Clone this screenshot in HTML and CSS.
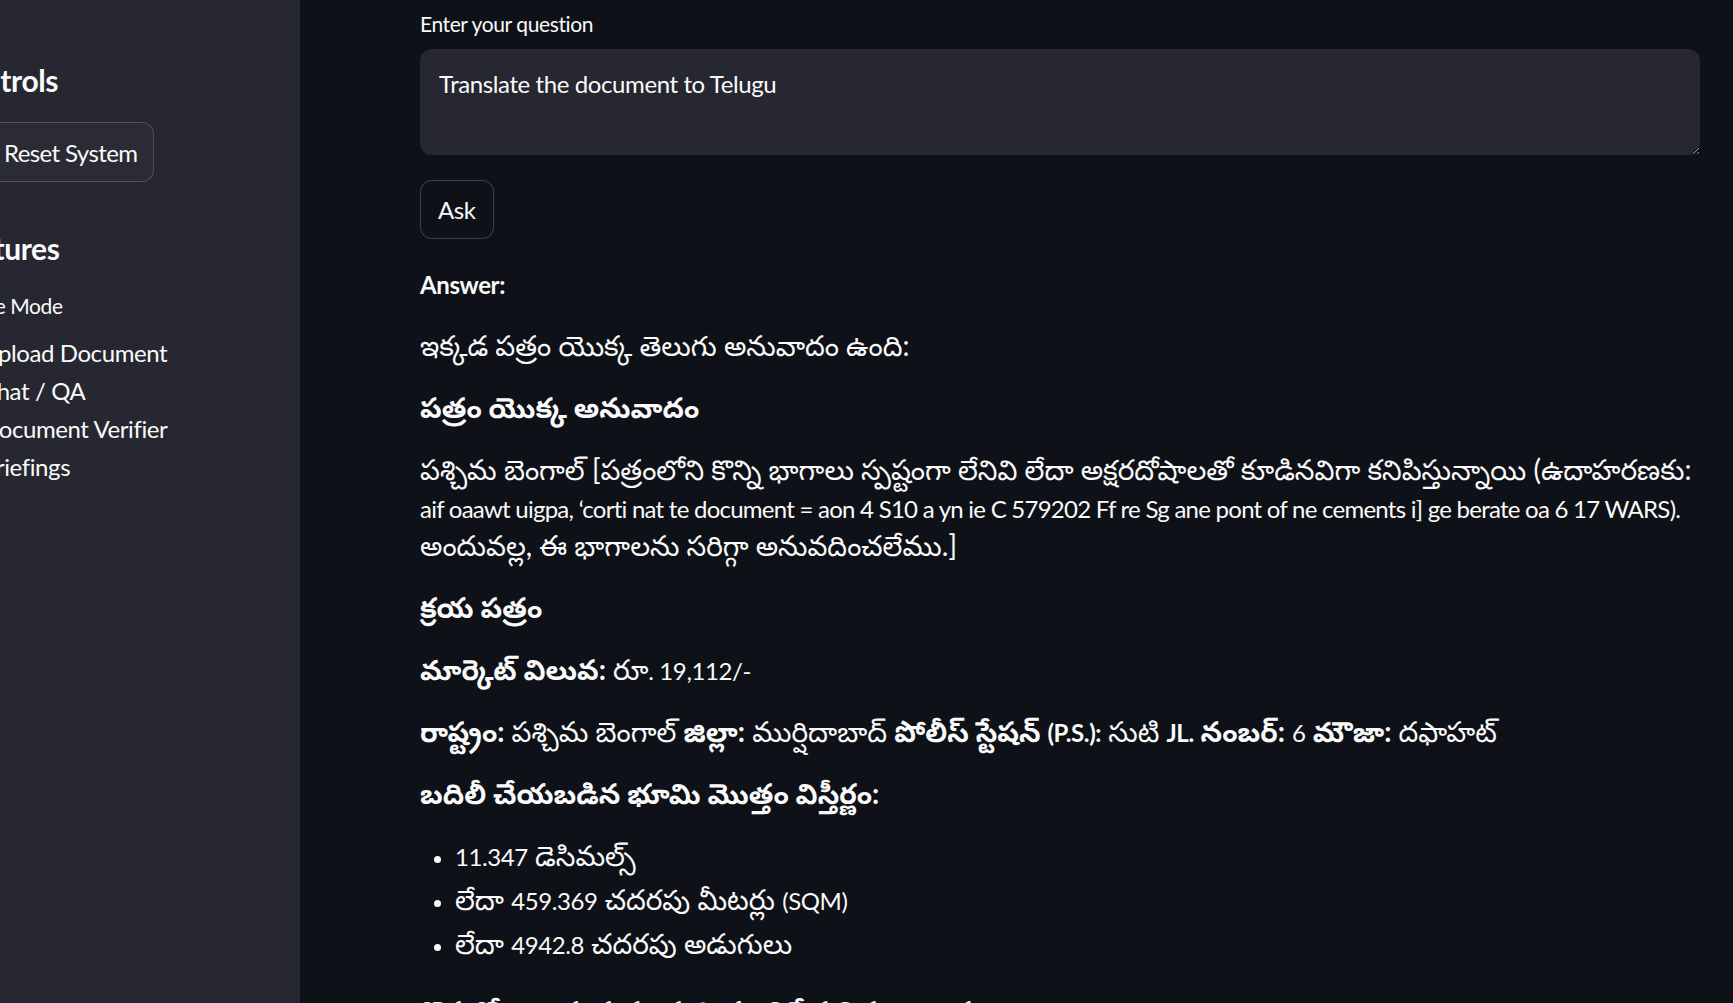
FILE: index.html
```html
<!DOCTYPE html>
<html lang="te">
<head>
<meta charset="utf-8">
<title>Document QA</title>
<link rel="stylesheet" href="styles.css">
</head>
<body>
<div class="app">
  <aside class="sidebar">
    <div class="sidebar-inner">
      <h2 class="side-title">Controls</h2>
      <button class="side-btn"><span class="btn-icon"><svg viewBox="0 0 24 24" width="22" height="22"><path d="M20 11a8 8 0 1 0-2.3 5.7" fill="none" stroke="#4a90e2" stroke-width="2.4"/><path d="M20 4v7h-7" fill="none" stroke="#4a90e2" stroke-width="2.4"/></svg></span>Reset System</button>
      <h2 class="side-title features">Features</h2>
      <div class="side-label">Choose Mode</div>
      <ul class="radio-list">
        <li><span class="radio"></span>Upload Document</li>
        <li><span class="radio on"></span>Chat / QA</li>
        <li><span class="radio"></span>Document Verifier</li>
        <li><span class="radio"></span>Briefings</li>
      </ul>
    </div>
  </aside>
  <main class="main">
    <div class="content">
      <label class="field-label" for="q">Enter your question</label>
      <textarea id="q" class="question">Translate the document to Telugu</textarea>
      <button class="ask-btn">Ask</button>
      <p class="answer-title"><span class="en">Answer:</span></p>
      <p>ఇక్కడ పత్రం యొక్క తెలుగు అనువాదం ఉంది:</p>
      <p class="sub">పత్రం యొక్క అనువాదం</p>
      <p>పశ్చిమ బెంగాల్ [పత్రంలోని కొన్ని భాగాలు స్పష్టంగా లేనివి లేదా అక్షరదోషాలతో కూడినవిగా కనిపిస్తున్నాయి (ఉదాహరణకు: <span class="en tight">aif oaawt uigpa, ‘corti nat te document = aon 4 S10 a yn ie C 579202 Ff re Sg ane pont of ne cements i] ge berate oa 6 17 WARS).</span> అందువల్ల, ఈ భాగాలను సరిగ్గా అనువదించలేము.]</p>
      <p class="sub">క్రయ పత్రం</p>
      <p><b>మార్కెట్ విలువ:</b> రూ<span class="en">. 19,112/-</span></p>
      <p><b>రాష్ట్రం:</b> పశ్చిమ బెంగాల్ <b>జిల్లా:</b> ముర్షిదాబాద్ <b>పోలీస్ స్టేషన్ <span class="en">(P.S.):</span></b> సుటి <b><span class="en">JL.</span> నంబర్:</b> <span class="en">6</span> <b>మౌజా:</b> దఫాహట్</p>
      <p class="sub">బదిలీ చేయబడిన భూమి మొత్తం విస్తీర్ణం:</p>
      <ul class="bullets">
        <li><span class="en">11.347</span> డెసిమల్స్</li>
        <li>లేదా <span class="en">459.369</span> చదరపు మీటర్లు <span class="en">(SQM)</span></li>
        <li>లేదా <span class="en">4942.8</span> చదరపు అడుగులు</li>
      </ul>
      <p class="sub">కొనుగోలుదారు పత్రం మరియు విక్రేత వివరాలు: రూ<span class="en">. 17</span></p>
    </div>
  </main>
</div>
</body>
</html>
```

FILE: styles.css
```css
html, body {
  margin: 0;
  padding: 0;
  height: 100%;
  overflow: hidden;
  background: #0e1117;
}
body {
  font-family: "Source Sans Pro", Lato, "Noto Sans Telugu", "Noto Sans", sans-serif;
  color: #fafafa;
}
.app {
  display: flex;
  height: 100vh;
}
.sidebar {
  width: 300px;
  flex: none;
  background: #262730;
  overflow: hidden;
  letter-spacing: -0.4px;
}
.sidebar-inner {
  margin-left: -52px;
  display: flex;
  flex-direction: column;
  align-items: flex-start;
}
.side-title {
  margin: 62px 0 0;
  font-size: 30px;
  line-height: 36px;
  font-weight: 700;
}
.side-title.features {
  margin-top: 48px;
}
.side-btn {
  margin-top: 24px;
  height: 60px;
  display: flex;
  align-items: center;
  gap: 13px;
  padding: 0 16px 0 18px;
  background: #2a2b34;
  border: 1px solid rgba(250, 250, 250, 0.2);
  border-radius: 12px;
  color: #fafafa;
  font: inherit;
  font-size: 24px;
  letter-spacing: -0.6px;
}
.btn-icon {
  display: flex;
  width: 24px;
}
.side-label {
  margin-top: 23px;
  margin-left: -10px;
  font-size: 21px;
  line-height: 34px;
}
.radio-list {
  list-style: none;
  margin: 11px 0 0;
  padding: 0;
}
.radio-list li {
  display: flex;
  align-items: center;
  font-size: 24px;
  line-height: 38px;
}
.radio {
  width: 24px;
  height: 24px;
  border-radius: 50%;
  border: 2px solid #6b6c75;
  box-sizing: border-box;
  margin-right: 9px;
}
.radio.on {
  border: 7px solid #ff4b4b;
}
.main {
  flex: 1;
  overflow: hidden;
}
.content {
  margin: 0 33px 0 120px;
  padding-top: 7px;
  display: flex;
  flex-direction: column;
  align-items: flex-start;
}
.field-label {
  font-size: 21px;
  line-height: 34px;
  letter-spacing: -0.4px;
}
.question {
  margin-top: 8px;
  width: 100%;
  height: 106px;
  box-sizing: border-box;
  background: #262730;
  border: none;
  border-radius: 12px;
  padding: 16px 19px;
  color: #fafafa;
  font: inherit;
  font-size: 24px;
  line-height: 38px;
  letter-spacing: -0.4px;
  color-scheme: dark;
  outline: none;
  resize: vertical;
}
.ask-btn {
  margin-top: 25px;
  height: 59px;
  padding: 0 17px;
  background: #0e1117;
  border: 1px solid rgba(250, 250, 250, 0.2);
  border-radius: 12px;
  color: #fafafa;
  font: inherit;
  font-size: 24px;
  letter-spacing: -0.4px;
}
.content p {
  margin: 0 0 24px;
  font-size: 28px;
  line-height: 38px;
}
.content p.answer-title {
  margin-top: 25px;
  font-weight: 700;
}
.content p.sub {
  font-weight: 700;
}
.content b {
  font-weight: 700;
}
.content .en {
  font-size: 24px;
  line-height: 1;
  letter-spacing: -0.4px;
}
.content .en.tight {
  letter-spacing: -0.75px;
}
.bullets {
  margin: 0 0 24px;
  padding-left: 35px;
  font-size: 28px;
  line-height: 38px;
}
.bullets li {
  margin-bottom: 6px;
}
.bullets li::marker {
  font-size: 22px;
}
```
